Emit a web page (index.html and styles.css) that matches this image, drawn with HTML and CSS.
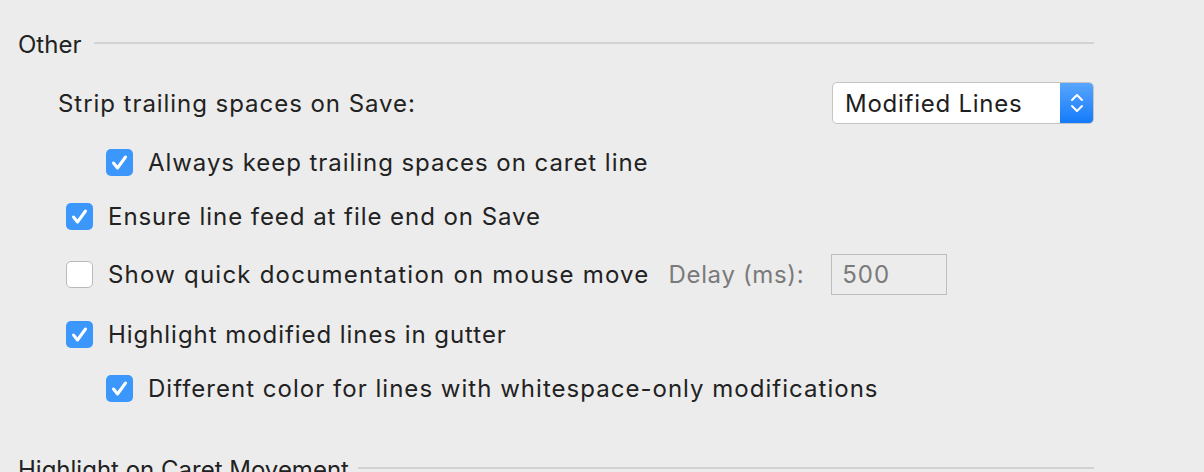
FILE: index.html
```html
<!DOCTYPE html>
<html>
<head>
<meta charset="utf-8">
<link rel="stylesheet" href="styles.css">
</head>
<body>
<div class="panel">
  <div class="section-head">
    <span class="section-title">Other</span>
    <span class="section-line"></span>
  </div>

  <div class="row strip-row">
    <span class="label">Strip trailing spaces on Save:</span>
    <div class="select">
      <span class="select-text">Modified Lines</span>
      <span class="select-btn">
        <svg width="16" height="22" viewBox="0 0 16 22"><path d="M3 8 L8 3 L13 8" fill="none" stroke="#fff" stroke-width="2" stroke-linecap="round" stroke-linejoin="round"/><path d="M3 14 L8 19 L13 14" fill="none" stroke="#fff" stroke-width="2" stroke-linecap="round" stroke-linejoin="round"/></svg>
      </span>
    </div>
  </div>

  <div class="row check-row sub r-always">
    <span class="cb checked"><svg width="27" height="27" viewBox="0 0 27 27"><path d="M7.5 14 L11.5 19 L19.5 8" fill="none" stroke="#fff" stroke-width="3" stroke-linecap="round" stroke-linejoin="round"/></svg></span>
    <span class="label">Always keep trailing spaces on caret line</span>
  </div>

  <div class="row check-row main r-ensure">
    <span class="cb checked"><svg width="27" height="27" viewBox="0 0 27 27"><path d="M7.5 14 L11.5 19 L19.5 8" fill="none" stroke="#fff" stroke-width="3" stroke-linecap="round" stroke-linejoin="round"/></svg></span>
    <span class="label">Ensure line feed at file end on Save</span>
  </div>

  <div class="row check-row main r-show">
    <span class="cb"></span>
    <span class="label label-show">Show quick documentation on mouse move</span>
    <span class="muted delay-label">Delay (ms):</span>
    <span class="num-input">500</span>
  </div>

  <div class="row check-row main r-highlight">
    <span class="cb checked"><svg width="27" height="27" viewBox="0 0 27 27"><path d="M7.5 14 L11.5 19 L19.5 8" fill="none" stroke="#fff" stroke-width="3" stroke-linecap="round" stroke-linejoin="round"/></svg></span>
    <span class="label">Highlight modified lines in gutter</span>
  </div>

  <div class="row check-row sub r-different">
    <span class="cb checked"><svg width="27" height="27" viewBox="0 0 27 27"><path d="M7.5 14 L11.5 19 L19.5 8" fill="none" stroke="#fff" stroke-width="3" stroke-linecap="round" stroke-linejoin="round"/></svg></span>
    <span class="label label-diff">Different color for lines with whitespace-only modifications</span>
  </div>

  <div class="section-head section-2">
    <span class="section-title">Highlight on Caret Movement</span>
    <span class="section-line line-2"></span>
  </div>
</div>
</body>
</html>
```

FILE: styles.css
```css
html, body {
  margin: 0;
  padding: 0;
  background: #ececec;
  height: 100%;
  overflow: hidden;
}
body {
  font-family: "Inter", "Roboto", "Noto Sans", sans-serif;
  font-size: 24px;
  letter-spacing: 0.95px;
  color: #222222;
}
.panel {
  margin-left: 18px;
  width: 1076px;
  padding-top: 30px;
  display: flex;
  flex-direction: column;
}
.section-head {
  display: flex;
  align-items: center;
  height: 28px;
}
.section-title {
  white-space: nowrap;
  letter-spacing: 0;
}
.section-line {
  flex: 1;
  height: 2px;
  background: #d2d2d2;
  margin-left: 13px;
  margin-top: -2px;
}
.line-2 { margin-left: 9px; }
.row {
  display: flex;
  align-items: center;
  white-space: nowrap;
}
.strip-row {
  margin-top: 24px;
  height: 42px;
  padding-left: 40px;
  justify-content: space-between;
}
.select {
  width: 262px;
  height: 42px;
  box-sizing: border-box;
  border: 1px solid #c4c4c4;
  border-radius: 5px;
  background: #ffffff;
  display: flex;
  overflow: hidden;
}
.select-text {
  flex: 1;
  padding-left: 12px;
  display: flex;
  align-items: center;
  color: #1e1e1e;
  letter-spacing: 0.75px;
}
.select-btn {
  width: 34px;
  margin: -1px -1px -1px 0;
  background: linear-gradient(#5aa6fd, #137afa);
  display: flex;
  align-items: center;
  justify-content: center;
}
.check-row {
  height: 28px;
}
.check-row.main { padding-left: 48px; }
.check-row.sub { padding-left: 88px; }
.label-show { letter-spacing: 1.22px; }
.label-diff { letter-spacing: 1.02px; }
.r-always { margin-top: 24px; }
.r-ensure { margin-top: 26px; }
.r-show { margin-top: 24px; height: 41px; }
.r-highlight { margin-top: 25px; }
.r-different { margin-top: 26px; }
.section-2 { margin-top: 53px; }
.cb {
  width: 27px;
  height: 27px;
  box-sizing: border-box;
  border-radius: 5px;
  background: #ffffff;
  border: 1px solid #b9b9b9;
  margin-right: 15px;
  flex: none;
  display: flex;
}
.cb.checked {
  background: #3b97fb;
  border: none;
}
.delay-label {
  margin-left: 19px;
  color: #7a7a7a;
  letter-spacing: 0.65px;
}
.muted { color: #7a7a7a; }
.num-input {
  margin-left: 27px;
  width: 116px;
  height: 41px;
  box-sizing: border-box;
  border: 1px solid #bdbdbd;
  background: #ececec;
  color: #7a7a7a;
  padding-left: 10px;
  display: flex;
  align-items: center;
}
```
